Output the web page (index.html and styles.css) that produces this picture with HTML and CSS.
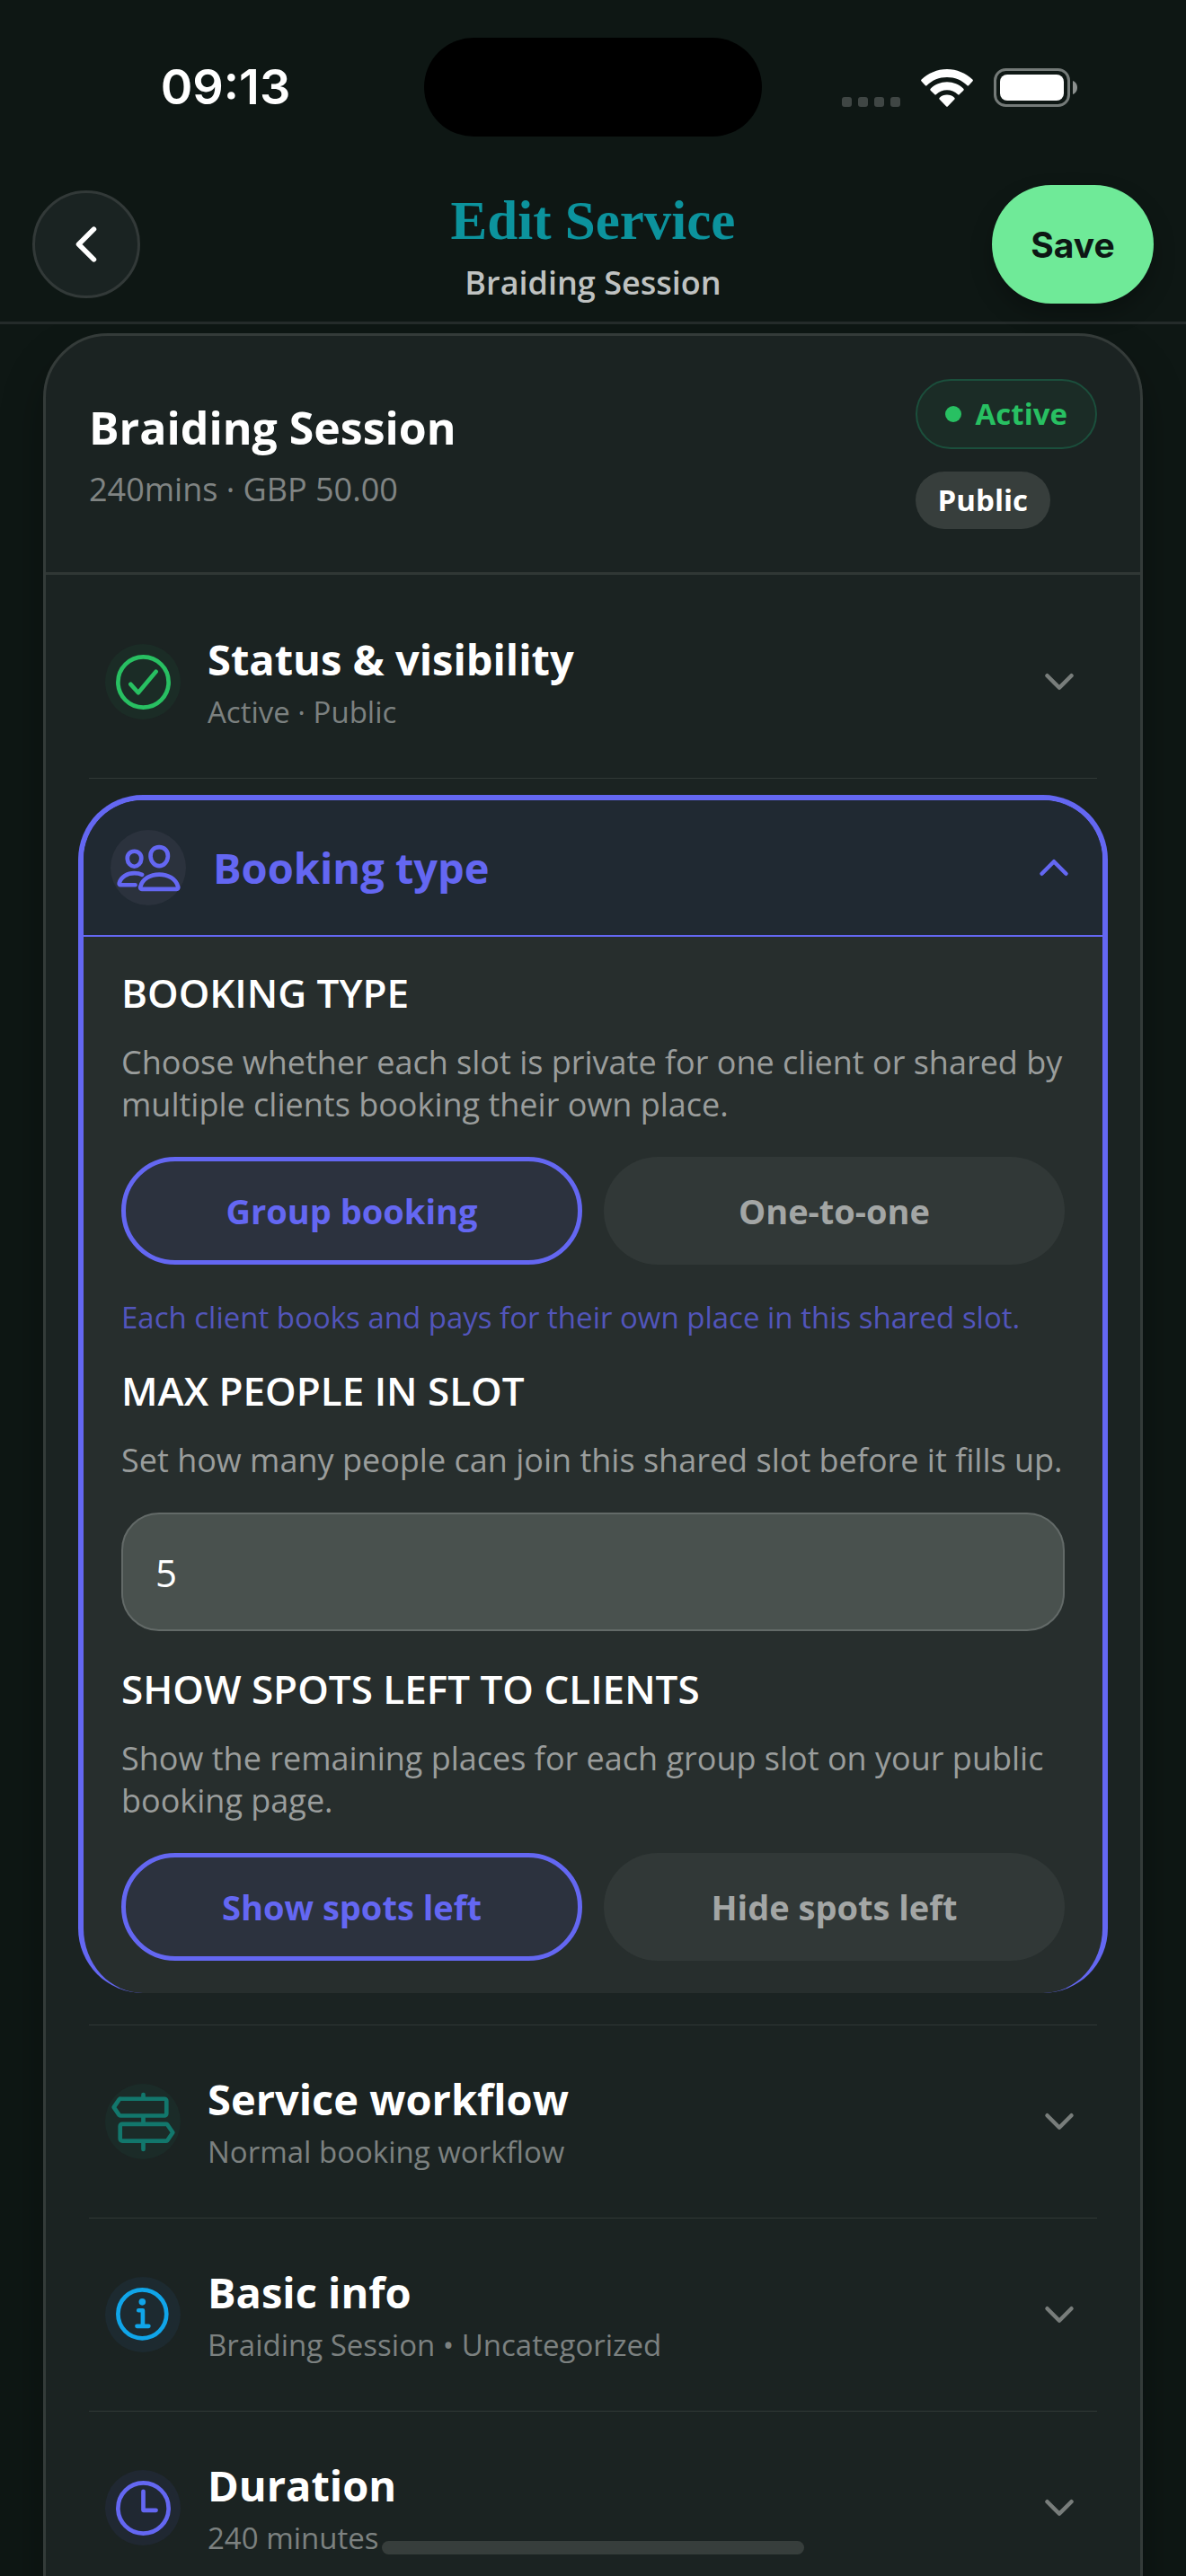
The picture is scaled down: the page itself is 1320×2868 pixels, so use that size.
FILE: index.html
```html
<!DOCTYPE html>
<html lang="en">
<head>
	<meta charset="UTF-8">
	<meta name="viewport" content="width=device-width, initial-scale=1">
	<title>Edit Service</title>
	<link rel="stylesheet" href="styles.css">
</head>
<body>
	<!-- shared icons -->
	<svg class="sprite" aria-hidden="true">
		<symbol id="chevron" viewBox="0 0 512 512">
			<path d="M112 184l144 144 144-144" fill="none" stroke="currentColor" stroke-width="48" stroke-linecap="round" stroke-linejoin="round"/>
		</symbol>
	</svg>

	<div class="screen">
		<div class="status-bar">
			<span class="time">09:13</span>
			<span class="island"></span>
			<div class="status-icons">
				<svg class="signal" viewBox="0 0 65 11" fill="currentColor" aria-hidden="true">
					<rect x="0" width="11" height="11" rx="3"/>
					<rect x="18" width="11" height="11" rx="3"/>
					<rect x="36" width="11" height="11" rx="3"/>
					<rect x="54" width="11" height="11" rx="3"/>
				</svg>
				<svg class="wifi" viewBox="0 0 58 42" fill="currentColor" aria-hidden="true">
					<path d="M29 0C18 0 8 4.500 .6 11.600q-1 1 0 2L4.700 18q1 1 2 0C12.500 12.200 20.400 9 29 9s16.500 3.200 22.300 9q1 1 2 0l4.100-4.400q1-1 0-2C50 4.500 40 0 29 0z"/>
					<path d="M29 14.300c-7.100 0-13.600 2.800-18.300 7.400q-1 1 0 2l4.400 4.400q1 1 2 0C20.200 25 24.400 23.200 29 23.200s8.800 1.800 11.900 4.900q1 1 2 0l4.400-4.400q1-1 0-2C42.600 17.100 36.100 14.300 29 14.300z"/>
					<path d="M29 28.500c-3.200 0-6.100 1.200-8.200 3.200q-1 1 0 2L28 41.300q1 1 2 0l7.200-7.600q1-1 0-2c-2.100-2-5-3.200-8.200-3.200z"/>
				</svg>
				<svg class="battery" viewBox="0 0 94 43" aria-hidden="true">
					<rect x="1.500" y="1.500" width="82" height="40" rx="12" fill="none" stroke="#747a78" stroke-width="3"/>
					<path d="M88 14v15c3-1 5-4 5-7.500S91 15 88 14z" fill="#8b908e"/>
					<rect x="7" y="7" width="71" height="29" rx="8" fill="#fff"/>
				</svg>
			</div>
		</div>

		<header class="top">
			<button class="back" type="button" aria-label="Back">
				<svg viewBox="0 0 512 512" aria-hidden="true"><path d="M328 112L184 256l144 144" fill="none" stroke="currentColor" stroke-width="48" stroke-linecap="round" stroke-linejoin="round"/></svg>
			</button>
			<div class="heading">
				<h1>Edit Service</h1>
				<p>Braiding Session</p>
			</div>
			<button class="save" type="button">Save</button>
		</header>

		<main class="content">
			<section class="card">
				<div class="card-head">
					<div class="summary">
						<h2>Braiding Session</h2>
						<p>240mins · GBP 50.00</p>
					</div>
					<div class="badges">
						<span class="badge active"><i class="dot"></i>Active</span>
						<span class="badge public">Public</span>
					</div>
				</div>

				<div class="rows">
					<button class="row" type="button" aria-expanded="false">
						<span class="icon green">
							<svg viewBox="0 0 512 512" aria-hidden="true">
								<circle cx="256" cy="256" r="192"/>
								<path d="M352 176L217.600 336 160 272"/>
							</svg>
						</span>
						<span class="text">
							<span class="name">Status &amp; visibility</span>
							<span class="sub">Active · Public</span>
						</span>
						<svg class="chev" aria-hidden="true"><use href="#chevron"/></svg>
					</button>

					<div class="open-wrap">
						<div class="open">
							<button class="open-head" type="button" aria-expanded="true">
								<span class="icon people">
									<svg viewBox="0 0 512 512" aria-hidden="true">
										<path d="M402 168c-2.930 40.670-33.100 72-66 72s-63.120-31.320-66-72c-3-42.310 26.370-72 66-72s69 30.460 66 72z"/>
										<path d="M336 304c-65.170 0-127.840 32.370-143.540 95.410-2.080 8.340 3.150 16.590 11.720 16.590h263.650c8.570 0 13.770-8.250 11.720-16.590C463.850 335.360 401.180 304 336 304z"/>
										<path d="M200 185.940c-2.340 32.480-26.720 58.060-53 58.060s-50.700-25.570-53-58.060C91.610 152.150 115.340 128 147 128s55.390 24.770 53 57.940z"/>
										<path d="M206 306c-18.050-8.270-37.930-11.450-59-11.450-52 0-102.100 25.850-114.650 76.200-1.650 6.660 2.530 13.250 9.370 13.250H154"/>
									</svg>
								</span>
								<span class="text name">Booking type</span>
								<svg class="chev up" aria-hidden="true"><use href="#chevron"/></svg>
							</button>
							<div class="open-body">
								<h3>BOOKING TYPE</h3>
								<p class="desc">Choose whether each slot is private for one client or shared by multiple clients booking their own place.</p>
								<div class="options">
									<button class="option selected" type="button" aria-pressed="true">Group booking</button>
									<button class="option" type="button" aria-pressed="false">One-to-one</button>
								</div>
								<p class="hint">Each client books and pays for their own place in this shared slot.</p>

								<h3><label for="max-people">MAX PEOPLE IN SLOT</label></h3>
								<p class="desc">Set how many people can join this shared slot before it fills up.</p>
								<input id="max-people" class="field" type="text" inputmode="numeric" value="5">

								<h3>SHOW SPOTS LEFT TO CLIENTS</h3>
								<p class="desc">Show the remaining places for each group slot on your public booking page.</p>
								<div class="options">
									<button class="option selected" type="button" aria-pressed="true">Show spots left</button>
									<button class="option" type="button" aria-pressed="false">Hide spots left</button>
								</div>
							</div>
						</div>
					</div>

					<button class="row" type="button" aria-expanded="false">
						<span class="icon teal">
							<svg viewBox="0 0 512 512" aria-hidden="true">
								<path d="M256 400v64M256 208v64M256 48v32M416 208H84a16 16 0 01-11-4.300L32 144l41-59.700A16 16 0 0184 80h332a16 16 0 0116 16v96a16 16 0 01-16 16zM96 400h332a16 16 0 0011-4.300l41-59.700-41-59.700a16 16 0 00-11-4.300H96a16 16 0 00-16 16v96a16 16 0 0016 16z"/>
							</svg>
						</span>
						<span class="text">
							<span class="name">Service workflow</span>
							<span class="sub">Normal booking workflow</span>
						</span>
						<svg class="chev" aria-hidden="true"><use href="#chevron"/></svg>
					</button>

					<button class="row" type="button" aria-expanded="false">
						<span class="icon blue">
							<svg viewBox="0 0 512 512" aria-hidden="true">
								<circle cx="248" cy="248" r="184"/>
								<path d="M220 220h32v116M208 340h88"/>
								<circle class="fill" cx="248" cy="156" r="26"/>
							</svg>
						</span>
						<span class="text">
							<span class="name">Basic info</span>
							<span class="sub">Braiding Session • Uncategorized</span>
						</span>
						<svg class="chev" aria-hidden="true"><use href="#chevron"/></svg>
					</button>

					<button class="row" type="button" aria-expanded="false">
						<span class="icon indigo">
							<svg viewBox="0 0 512 512" aria-hidden="true">
								<circle cx="256" cy="256" r="192"/>
								<path d="M256 128v144h96"/>
							</svg>
						</span>
						<span class="text">
							<span class="name">Duration</span>
							<span class="sub">240 minutes</span>
						</span>
						<svg class="chev" aria-hidden="true"><use href="#chevron"/></svg>
					</button>
				</div>
			</section>
		</main>
	</div>
	<div class="home-bar"></div>
</body>
</html>
```

FILE: styles.css
```css
*{
	margin: 0;
	padding: 0;
	box-sizing: border-box;
}
html,body{height: 100%;}
body{
	background: #0e1714;
	color: #fff;
	font-family: "Open Sans", "Noto Sans", sans-serif;
}
button,input{
	font: inherit;
	color: inherit;
	border: 0;
	background: none;
}
button{cursor: pointer;}
svg{display: block;flex: none;}
.sprite{position: absolute;width: 0;height: 0;}

.screen{
	display: flex;
	flex-direction: column;
	height: 100vh;
	overflow: hidden;
}

/* status bar */
.status-bar{
	display: grid;
	grid-template-columns: 1fr 376px 1fr;
	align-items: center;
	padding: 42px 0 34px;
	font-family: Inter, sans-serif;
}
.time{
	padding-left: 30px;
	font-size: 54px;
	font-weight: 600;
	line-height: 60px;
	text-align: center;
}
.island{
	height: 110px;
	border-radius: 55px;
	background: #000;
}
.status-icons{
	display: flex;
	justify-content: flex-end;
	align-items: flex-end;
	gap: 23px;
	padding-right: 120px;
}
.signal{width: 65px;height: 11px;color: #3f4644;}
.wifi{width: 58px;height: 42px;}
.battery{width: 94px;height: 43px;}

/* top bar */
.top{
	display: flex;
	align-items: center;
	justify-content: space-between;
	padding: 20px 36px;
	border-bottom: 3px solid #242b2a;
}
.back{
	width: 120px;
	height: 120px;
	border: 3px solid #323938;
	border-radius: 50%;
	background: #1a2322;
	display: flex;
	align-items: center;
	justify-content: center;
}
.back svg{width: 60px;height: 60px;}
.heading{
	flex: 1;
	text-align: center;
	padding: 4px 0 0 60px;
}
.heading h1{
	font-family: "Liberation Serif", serif;
	font-size: 61px;
	line-height: 72px;
	color: #0c939d;
}
.heading p{
	font-size: 36px;
	line-height: 46px;
	margin-top: 10px;
	font-weight: 600;
	color: #bfc2c1;
}
.save{
	width: 180px;
	height: 132px;
	border-radius: 66px;
	background: #6fea98;
	color: #0d1714;
	font-family: Inter, sans-serif;
	font-size: 39px;
	font-weight: 700;
	box-shadow: 0 12px 24px rgba(0,0,0,.25);
}

/* card */
.content{
	flex: 1;
	min-height: 0;
	overflow: hidden;
	padding: 10px 48px 0;
}
.card{
	border: 3px solid #343b39;
	border-radius: 72px;
	background: #1b2322;
	box-shadow: 0 24px 48px rgba(0,0,0,.3);
}
.card-head{
	display: flex;
	justify-content: space-between;
	align-items: center;
	padding: 48px;
	border-bottom: 3px solid #303735;
}
.summary h2{font-size: 50px;line-height: 66px;font-weight: 700;}
.summary p{font-size: 36px;line-height: 48px;margin-top: 12px;color: #808483;}
.badges{
	display: flex;
	flex-direction: column;
	align-items: flex-start;
	gap: 25px;
}
.badge{
	display: flex;
	align-items: center;
	font-size: 33px;
	font-weight: 700;
	line-height: 42px;
	border-radius: 39px;
}
.active{
	gap: 16px;
	padding: 16px 31px;
	border: 2px solid #1b4f3c;
	background: #1b2c26;
	color: #28c062;
}
.dot{width: 18px;height: 18px;border-radius: 50%;background: currentColor;}
.public{padding: 11px 25px;background: #373e3c;}

/* accordion rows */
.rows{padding: 12px 48px 96px;}
.row{
	width: 100%;
	height: 215px;
	display: flex;
	align-items: center;
	gap: 30px;
	padding: 0 18px;
	border-bottom: 1px solid #303836;
	text-align: left;
}
.text{flex: 1;}
.name{
	display: block;
	font-size: 47px;
	line-height: 60px;
	font-weight: 700;
}
.sub{
	display: block;
	font-size: 33px;
	line-height: 45px;
	margin-top: 6px;
	color: #7c8180;
}
.icon{
	flex: none;
	width: 84px;
	height: 84px;
	border-radius: 50%;
	display: flex;
	align-items: center;
	justify-content: center;
}
.icon svg{
	width: 75px;
	height: 75px;
	fill: none;
	stroke: currentColor;
	stroke-width: 32px;
	stroke-linecap: round;
	stroke-linejoin: round;
}
.icon .fill{fill: currentColor;stroke: none;}
.green{background: #1b2c26;color: #28c062;}
.teal{background: #1b2b28;color: #12776c;}
.blue{background: #1d2a30;color: #10a5e9;}
.indigo{background: #202832;color: #6467f2;}
.people{background: #2b323d;}
.chev{width: 48px;height: 48px;color: #787d7b;}
.up{transform: rotate(180deg);color: #6467f2;}

/* expanded section */
.open-wrap{
	margin: 0 -12px;
	padding: 18px 0 36px;
	position: relative;
}
.open-wrap::after{
	content: "";
	position: absolute;
	left: 12px;
	right: 12px;
	bottom: 0;
	height: 1px;
	background: #303836;
}
.open{
	border: 6px solid #6467f2;
	border-bottom: 0;
	border-radius: 72px;
	background: #272e2d;
	overflow: hidden;
}
.open-head{
	width: 100%;
	height: 152px;
	display: flex;
	align-items: center;
	gap: 30px;
	padding: 0 30px;
	border-bottom: 2px solid #6467f2;
	background: #202932;
	color: #6467f2;
	text-align: left;
}
.open-body{padding: 34px 42px 36px;}
.open-body h3{
	font-size: 44px;
	line-height: 57px;
	font-weight: 600;
}
.desc{
	font-size: 36px;
	line-height: 47px;
	margin: 25px 0 35px;
	color: #9a9d9c;
}
.options{
	display: grid;
	grid-template-columns: 1fr 1fr;
	gap: 24px;
}
.option{
	height: 120px;
	border-radius: 60px;
	background: #313837;
	color: #a3a6a5;
	font-size: 38px;
	font-weight: 700;
}
.selected{
	border: 5px solid #6467f2;
	background: #2c323e;
	color: #6467f2;
}
.hint{
	font-size: 33px;
	line-height: 45px;
	margin: 36px 0 31px;
	color: #5255bb;
}
.field{
	display: block;
	width: 100%;
	height: 132px;
	margin-bottom: 36px;
	padding: 0 36px;
	border: 2px solid #636a68;
	border-radius: 42px;
	background: #49514e;
	font-size: 42px;
}

.home-bar{
	position: fixed;
	left: 50%;
	bottom: 24px;
	width: 470px;
	height: 15px;
	border-radius: 8px;
	background: #373e3c;
	transform: translateX(-50%);
}
```
